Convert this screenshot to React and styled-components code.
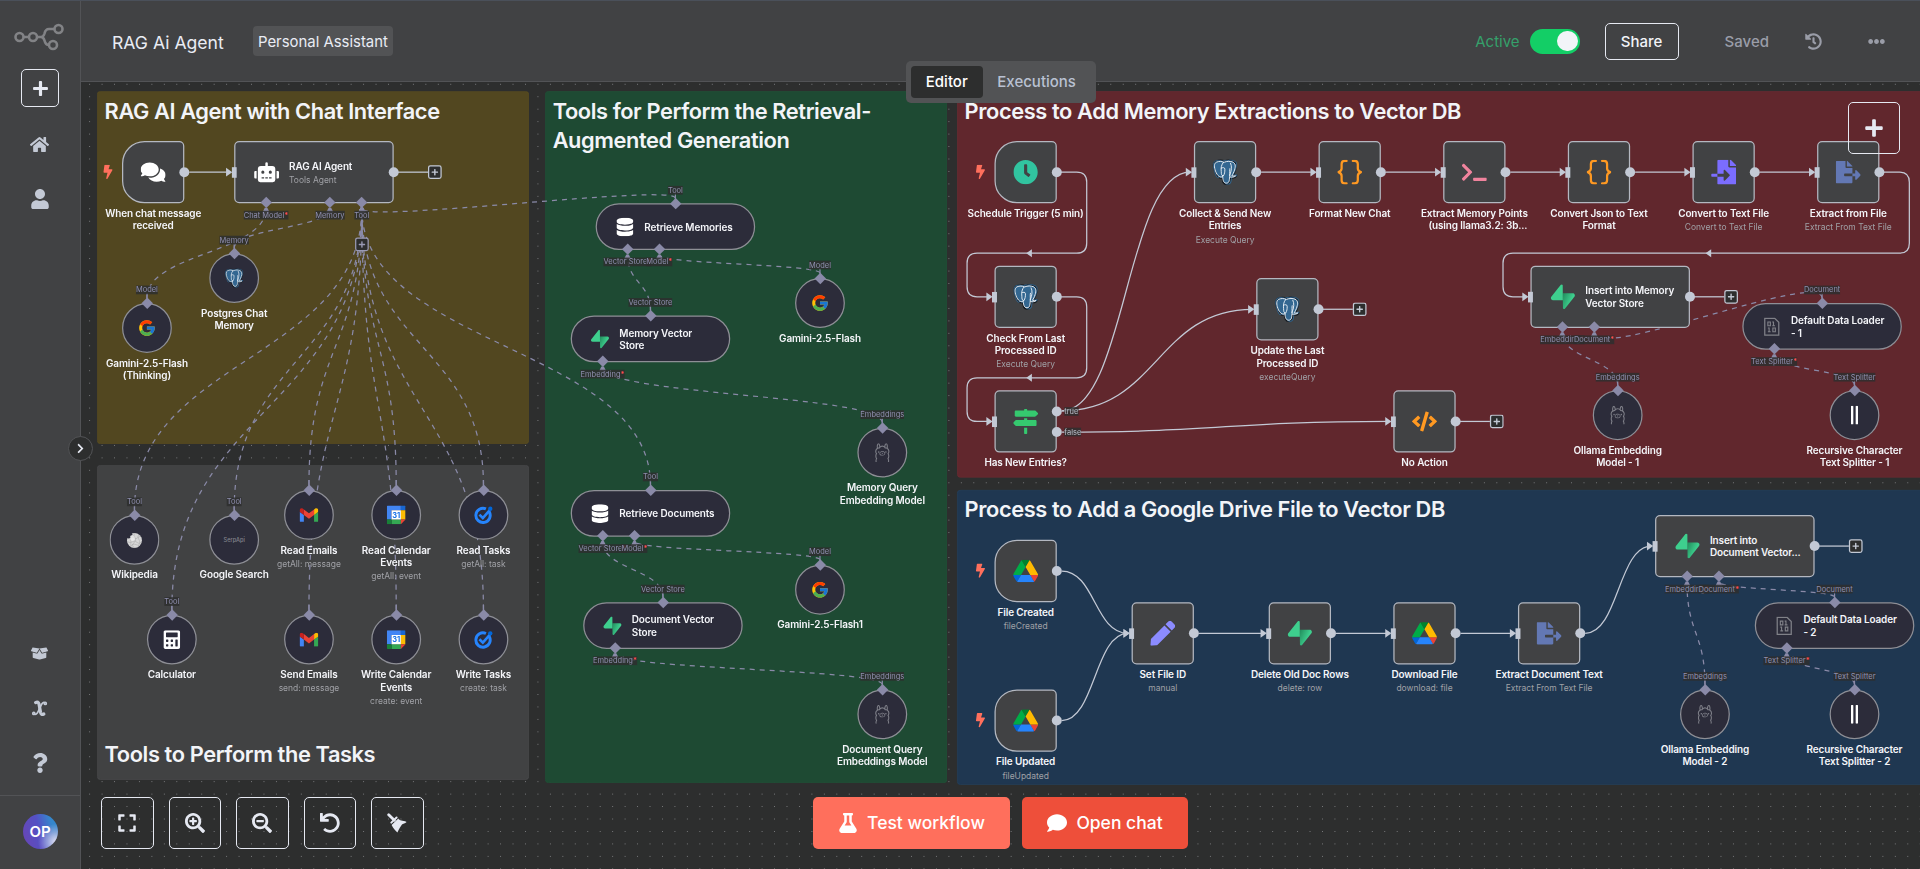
import React from 'react';
import styled, { createGlobalStyle, css } from 'styled-components';
import {
  FaBolt, FaBoxOpen, FaCalculator, FaChevronRight, FaClock, FaCode, FaComment, FaComments,
  FaDatabase, FaEllipsisH, FaExpand, FaFileExport, FaFileImport, FaFlask, FaGripLinesVertical,
  FaHistory, FaHome, FaMapSigns, FaPen, FaPlus, FaQuestion, FaRobot, FaSearchMinus, FaSearchPlus,
  FaTerminal, FaUndo, FaUser,
} from 'react-icons/fa';
import { FcGoogle } from 'react-icons/fc';
import { SiOllama, SiPostgresql } from 'react-icons/si';

const color = {
  panel: '#414244',
  canvas: '#2d2e2e',
  line: '#525356',
  raised: '#525355',
  light: '#e6e9f2',
  muted: '#c3c9d5',
  edge: '#c3c9d5',
  sub: '#8a8aa8',
};

const Global = createGlobalStyle`
  * { box-sizing: border-box; }
  body {
    margin: 0;
    background: ${color.canvas};
    font-family: Inter, "Liberation Sans", sans-serif;
    overflow: hidden;
  }
`;

/* ---------- shell ---------- */

const Shell = styled.div`
  display: flex;
  width: 100vw;
  height: 100vh;
  border-top: 1px solid #4a505a;
`;

const Sidebar = styled.nav`
  position: relative;
  z-index: 5;
  display: flex;
  flex-direction: column;
  align-items: center;
  width: 81px;
  flex: none;
  background: ${color.panel};
  border-right: 1px solid ${color.line};
`;

const Logo = styled.svg`
  width: 50px;
  height: 28px;
  margin: 22px 0 18px -2px;
`;

const SquareButton = styled.button`
  display: flex;
  align-items: center;
  justify-content: center;
  width: ${(p) => p.$size}px;
  height: ${(p) => p.$size}px;
  padding: 0;
  border: 1px solid ${color.light};
  border-radius: 5px;
  background: transparent;
  color: ${color.light};
  font-size: ${(p) => p.$icon}px;
`;

const NavItem = styled.div`
  display: flex;
  align-items: center;
  justify-content: center;
  height: 54.5px;
  padding-right: 1px;
  color: ${color.muted};
  font-size: ${(p) => p.$icon || 19}px;
`;

const NavTop = styled.div`
  display: flex;
  flex-direction: column;
  margin-top: 10px;
  flex: 1;
`;

const NavBottom = styled.div`
  display: flex;
  flex-direction: column;
  margin-bottom: 5px;
`;

const AvatarRow = styled.div`
  display: flex;
  align-items: center;
  justify-content: center;
  width: 100%;
  height: 74px;
  padding-bottom: 2px;
  border-top: 1px solid ${color.line};
`;

const Avatar = styled.div`
  display: flex;
  align-items: center;
  justify-content: center;
  width: 35px;
  height: 35px;
  border-radius: 50%;
  background:
    radial-gradient(circle at 95% 80%, #e4e0f4 0%, rgba(190, 190, 230, 0.6) 22%, transparent 42%),
    linear-gradient(75deg, #6a45b4 0%, #5450c4 48%, #3587cc 80%);
  color: #fff;
  font-size: 15px;
  font-weight: 600;
`;

const Expander = styled.div`
  position: absolute;
  right: -13px;
  top: 435px;
  display: flex;
  align-items: center;
  justify-content: center;
  width: 25px;
  height: 25px;
  border: 1px solid ${color.line};
  border-radius: 50%;
  background: ${color.canvas};
  color: ${color.light};
  font-size: 11px;
`;

const Main = styled.main`
  position: relative;
  display: flex;
  flex-direction: column;
  flex: 1;
  min-width: 0;
`;

const Header = styled.header`
  display: flex;
  align-items: center;
  height: 81px;
  flex: none;
  padding: 0 35.5px 0 31px;
  background: ${color.panel};
  border-bottom: 1px solid ${color.line};
`;

const Title = styled.div`
  width: 141px;
  color: #e9ecf4;
  font-size: 17.6px;
  white-space: nowrap;
  padding-top: 3px;
`;

const Tag = styled.div`
  height: 30px;
  padding: 0 5px;
  border-radius: 4px;
  background: ${color.raised};
  color: #e9ecf4;
  font-size: 14.9px;
  line-height: 32px;
`;

const HeaderEnd = styled.div`
  display: flex;
  align-items: center;
  margin-left: auto;
  color: #9a9da8;
  font-size: 15px;
  font-weight: 500;
`;

const ActiveText = styled.span`
  color: #35a06b;
  font-weight: 400;
  margin-right: 10px;
`;

const Toggle = styled.span`
  display: flex;
  justify-content: flex-end;
  width: 50px;
  height: 25px;
  padding: 2px;
  border-radius: 13px;
  background: #13ce66;
  margin-right: 25px;

  &::after {
    content: '';
    width: 20.5px;
    height: 20.5px;
    border-radius: 50%;
    background: #f2f4f8;
  }
`;

const Share = styled.button`
  width: 74px;
  height: 37px;
  padding: 0;
  border: 1px solid ${color.light};
  border-radius: 5px;
  background: transparent;
  color: #f2f4f8;
  font: 500 15px Inter, sans-serif;
  margin-right: 46px;
`;

const HeaderIcon = styled.span`
  display: flex;
  font-size: ${(p) => p.$size}px;
  margin-left: ${(p) => p.$gap}px;
`;

const Tabs = styled.div`
  position: absolute;
  z-index: 4;
  left: 825px;
  top: 60px;
  display: flex;
  height: 42px;
  padding: 5px;
  border-radius: 5px;
  background: ${color.raised};
`;

const Tab = styled.div`
  padding: 0 14.8px;
  border-radius: 4px;
  background: ${(p) => (p.$on ? color.canvas : 'transparent')};
  color: ${(p) => (p.$on ? '#fff' : '#b9c1d2')};
  font-size: 15px;
  font-weight: 500;
  line-height: 32px;
`;

/* ---------- canvas ---------- */

const Canvas = styled.section`
  position: relative;
  flex: 1;
  overflow: hidden;
  background-color: ${color.canvas};
  background-image: radial-gradient(circle, #7b7c7e 0.5px, transparent 0.95px);
  background-size: 12.46px 12.46px;
  background-position: 2.4px 8.5px;
`;

const World = styled.div`
  position: absolute;
  left: 41px;
  top: 59px;
  transform: scale(0.6232);
  transform-origin: 0 0;
`;

const Sticky = styled.div`
  position: absolute;
  left: ${(p) => p.$x}px;
  top: ${(p) => p.$y}px;
  width: ${(p) => p.$w}px;
  height: ${(p) => p.$h}px;
  padding: 6px 11px;
  border: 1.5px solid ${(p) => p.$line};
  border-radius: 5px;
  background: ${(p) => p.$bg};
`;

const StickyTitle = styled.h2`
  margin: 0;
  margin-top: ${(p) => p.$gap || 0}px;
  color: #f2f4f8;
  font-size: 35px;
  font-weight: 600;
  letter-spacing: -0.64px;
  line-height: 48px;
  white-space: pre;
`;

const EdgeLayer = styled.svg`
  position: absolute;
  left: 0;
  top: 0;
  width: 1px;
  height: 1px;
  overflow: visible;
`;

const shapes = {
  box: css`width: 100px; height: 100px; border-radius: 8px;`,
  trigger: css`width: 100px; height: 100px; border-radius: 36px 8px 8px 36px;`,
  wide: css`width: 256px; height: 100px; border-radius: 8px;`,
  pill: css`width: 256px; height: 75px; border-radius: 38px;`,
  circle: css`width: 80px; height: 80px; border-radius: 50%;`,
};

const NodeBody = styled.div`
  position: absolute;
  left: ${(p) => p.$x}px;
  top: ${(p) => p.$y}px;
  display: flex;
  align-items: center;
  justify-content: ${(p) => (p.$shape === 'wide' || p.$shape === 'pill' ? 'flex-start' : 'center')};
  gap: 16px;
  padding-left: ${(p) => (p.$shape === 'wide' || p.$shape === 'pill' ? 30 : 0)}px;
  border: 2px solid ${(p) => (p.$sub ? '#8e8f96' : '#b4b8c1')};
  background: ${(p) => (p.$sub ? '#2c2c3a' : color.panel)};
  ${(p) => shapes[p.$shape]}
`;

const IconSlot = styled.div`
  display: flex;
  align-items: center;
  justify-content: center;
  flex: none;
  width: ${(p) => p.$size}px;
  height: ${(p) => p.$size}px;
  font-size: ${(p) => p.$size}px;
  color: ${(p) => p.$color || '#fff'};
`;

const Caption = styled.div`
  position: absolute;
  left: 50%;
  top: calc(100% + 8px);
  transform: translateX(-50%);
  text-align: center;
  white-space: pre;
`;

const Name = styled.div`
  color: #f4f5f9;
  font-size: 16px;
  font-weight: 600;
  letter-spacing: -0.2px;
  line-height: 20px;
  white-space: pre;
`;

const SubTitle = styled.div`
  margin-top: 4px;
  color: #a0a1a6;
  font-size: 13.6px;
  line-height: 17px;
`;

const Dot = styled.i`
  position: absolute;
  right: -10px;
  top: ${(p) => p.$at}%;
  width: 16px;
  height: 16px;
  margin-top: -8px;
  border-radius: 50%;
  background: ${color.edge};
`;

const Inlet = styled.i`
  position: absolute;
  left: -6px;
  top: 50%;
  width: 8px;
  height: 17px;
  margin-top: -8.5px;
  background: ${color.edge};
`;

const Diamond = styled.i`
  position: absolute;
  left: ${(p) => p.$at}px;
  ${(p) => (p.$top ? 'top: -8px;' : 'bottom: -7px;')}
  width: 13px;
  height: 13px;
  margin-left: -8.5px;
  transform: rotate(45deg);
  background: ${color.sub};
`;

const PortLabel = styled.span`
  position: absolute;
  left: ${(p) => p.$at - 2}px;
  ${(p) => (p.$top ? 'top: -30.5px;' : 'bottom: -28px;')}
  transform: translateX(-50%);
  background: rgba(45, 46, 46, 0.86);
  color: #9090b0;
  font-size: 12px;
  line-height: 14px;
  white-space: nowrap;

  b { color: #ff4d4d; font-weight: 700; }
`;

const BranchLabel = styled.span`
  position: absolute;
  left: 110px;
  top: ${(p) => p.$at}%;
  transform: translateY(-50%);
  background: rgba(45, 46, 46, 0.82);
  color: #b9bdc8;
  font-size: 12px;
  line-height: 14px;
`;

const AddStub = styled.span`
  position: absolute;
  left: 100%;
  top: 50%;
  display: flex;
  align-items: center;
  height: 22px;
  margin-top: -11px;

  &::before {
    content: '';
    width: 57px;
    height: 2px;
    background: ${color.edge};
  }
`;

const AddBox = styled.span`
  display: flex;
  align-items: center;
  justify-content: center;
  width: 22px;
  height: 22px;
  border: 2px solid ${(p) => p.$tone};
  border-radius: 4px;
  background: ${color.canvas};
  color: ${(p) => p.$tone};
  font-size: 12px;
`;

const ToolStub = styled.span`
  position: absolute;
  left: ${(p) => p.$at - 13}px;
  top: 100%;
  display: flex;
  flex-direction: column;
  align-items: center;

  &::before {
    content: '';
    width: 2px;
    height: 57px;
    background: ${color.sub};
  }
`;

const Bolt = styled.span`
  position: absolute;
  left: -36px;
  top: 36px;
  display: flex;
  color: #ff6f5c;
  font-size: 23px;
`;

const SerpText = styled.span`
  color: #83848c;
  font-size: 9px;
  font-weight: 500;
`;

/* ---------- overlays ---------- */

const AddNode = styled.div`
  position: absolute;
  right: 20px;
  top: 20px;
`;

const Controls = styled.div`
  position: absolute;
  left: 20px;
  bottom: 20px;
  display: flex;
  gap: 15px;
`;

const Actions = styled.div`
  position: absolute;
  left: 732px;
  bottom: 20px;
  display: flex;
  gap: 12px;
`;

const Action = styled.button`
  display: flex;
  align-items: center;
  justify-content: center;
  gap: 9px;
  width: ${(p) => p.$w}px;
  height: 52px;
  padding: 0 0 1px;
  border: 0;
  border-radius: 5px;
  background: ${(p) => p.$bg};
  color: #fff;
  font: 500 17.5px Inter, sans-serif;

  svg { font-size: 20px; }
`;

/* ---------- drawings ---------- */

const Broom = () => (
  <svg viewBox="0 0 20 20" width="1em" height="1em" fill="currentColor">
    <path d="M1.700 1.700L7.300 7.300" stroke="currentColor" strokeWidth="2.800" strokeLinecap="round" />
    <path d="M4.300 9.600L9.600 4.500" stroke="currentColor" strokeWidth="2" strokeLinecap="round" />
    <path d="M4.600 12L11.300 5.600C12.500 8 15.500 7.300 19.600 9C18 10.600 16 10.400 15 11.600C13.800 13.200 12 16 10.400 19.500C8.500 17.500 6 15.500 4.600 12Z" />
  </svg>
);

const Drive = () => (
  <svg viewBox="0 0 87.3 78" width="1em" height="0.9em">
    <path fill="#0066da" d="m6.6 66.85 3.85 6.65c.8 1.4 1.95 2.5 3.3 3.3l13.75-23.8h-27.5c0 1.55.4 3.1 1.2 4.5z" />
    <path fill="#00ac47" d="m43.65 25-13.75-23.8c-1.35.8-2.5 1.9-3.3 3.3l-25.4 44a9.06 9.06 0 0 0 -1.2 4.5h27.5z" />
    <path fill="#ea4335" d="m73.55 76.8c1.35-.8 2.5-1.9 3.3-3.3l1.6-2.75 7.65-13.25c.8-1.4 1.2-2.95 1.2-4.5h-27.502l5.852 11.5z" />
    <path fill="#00832d" d="m43.65 25 13.75-23.8c-1.35-.8-2.9-1.2-4.5-1.2h-18.5c-1.6 0-3.15.45-4.5 1.2z" />
    <path fill="#2684fc" d="m59.8 53h-32.3l-13.75 23.8c1.35.8 2.9 1.2 4.5 1.2h50.8c1.6 0 3.15-.45 4.5-1.2z" />
    <path fill="#ffba00" d="m73.4 26.5-12.7-22c-.8-1.4-1.95-2.5-3.3-3.3l-13.75 23.8 16.15 28h27.45c0-1.55-.4-3.1-1.2-4.5z" />
  </svg>
);

const Gmail = () => (
  <svg viewBox="52 42 88 66" width="1em" height="0.76em">
    <path fill="#4285f4" d="M58 108h14V74L52 59v43c0 3.32 2.69 6 6 6" />
    <path fill="#34a853" d="M120 108h14c3.32 0 6-2.69 6-6V59l-20 15" />
    <path fill="#fbbc04" d="M120 48v26l20-15v-8c0-7.42-8.47-11.65-14.4-7.2" />
    <path fill="#ea4335" d="M72 74V48l24 18 24-18v26L96 92" />
    <path fill="#c5221f" d="M52 51v8l20 15V48l-5.6-4.2c-5.94-4.45-14.4-.22-14.4 7.2" />
  </svg>
);

const CalendarDay = styled.text`
  font: 700 24px Inter, sans-serif;
  fill: #1a73e8;
`;

const Calendar = () => (
  <svg viewBox="0 0 60 60" width="1em" height="1em">
    <path fill="#4285f4" d="M2 0h43v15H15v30H0V2z" />
    <path fill="#1967d2" d="M45 0h13l2 2v13H45z" />
    <path fill="#fbbc04" d="M45 15h15v30H45z" />
    <path fill="#34a853" d="M15 45h30v15H15z" />
    <path fill="#188038" d="M0 45h15v15H2l-2-2z" />
    <path fill="#ea4335" d="M45 45h15L45 60z" />
    <path fill="#fff" d="M15 15h30v30H15z" />
    <CalendarDay x="30" y="38.5" textAnchor="middle">31</CalendarDay>
  </svg>
);

const Tasks = () => (
  <svg viewBox="0 0 60 60" width="1em" height="1em">
    <path d="M48.5 20A23 23 0 1 1 38 10.5" fill="none" stroke="#2684fc" strokeWidth="9.5" />
    <path d="M17 29l11 11L51 14" fill="none" stroke="#2684fc" strokeWidth="8.5" />
    <circle cx="52" cy="10" r="7" fill="#0066da" />
  </svg>
);

const Supabase = () => (
  <svg viewBox="0 0 109 113" width="1em" height="1em">
    <defs>
      <linearGradient id="bolt" x1="54" y1="54" x2="94" y2="71" gradientUnits="userSpaceOnUse">
        <stop stopColor="#249361" />
        <stop offset="1" stopColor="#3ecf8e" />
      </linearGradient>
    </defs>
    <path fill="url(#bolt)" d="M63.7076 110.284C60.8481 113.885 55.0502 111.912 54.9813 107.314L53.9738 40.0627L99.1935 40.0627C107.384 40.0627 111.952 49.5228 106.859 55.9374L63.7076 110.284Z" />
    <path fill="#3ecf8e" d="M45.317 2.07103C48.1765 -1.53037 53.9745 0.442937 54.0434 5.041L54.4849 72.2922H9.83113C1.64038 72.2922 -2.92775 62.8321 2.1655 56.4175L45.317 2.07103Z" />
  </svg>
);

const Braces = () => (
  <svg viewBox="0 0 40 40" width="1em" height="1em" fill="none" stroke="currentColor" strokeWidth="3.6" strokeLinecap="round" strokeLinejoin="round">
    <path d="M15 2h-3q-5 0-5 5v7q0 4-5 6q5 2 5 6v7q0 5 5 5h3" />
    <path d="M25 2h3q5 0 5 5v7q0 4 5 6q-5 2-5 6v7q0 5-5 5h-3" />
  </svg>
);

const PostgresStack = styled.span`
  display: grid;
  > svg { grid-area: 1 / 1; overflow: visible; }
  > svg:last-child { transform: scale(0.96); }
`;

const Postgres = () => (
  <PostgresStack>
    <svg viewBox="0 0 24 24" width="1em" height="1em">
      <path
        d="M3 1.500C6 .2 9 .4 11.500 1.200C14 .2 17.500 .2 20 1.300C23 2.800 23.500 6 22 10C21 13 20.200 14.500 19.600 15.500L23 15.300C22.500 17 20 17.800 17 17.500C17 20 17.200 23.500 13.500 23.700C10 23.800 9.500 21 9.400 17.300C7 18.500 4 16.500 2 11C.6 7 .2 3 3 1.500Z"
        fill="#336791" stroke="#15181c" strokeWidth="1.300"
      />
    </svg>
    <SiPostgresql color="#336791" stroke="#336791" strokeWidth="0.1" />
    <svg viewBox="0 0 24 24" width="1em" height="1em" fill="none" stroke="#e9eff5" strokeWidth="0.95" strokeLinecap="round" strokeLinejoin="round">
      <path d="M9.400 16.500C7 17.800 4.300 16 2.400 11C1 7 .7 3.300 3.300 2C6 .9 8.500 1 10.500 2" />
      <path d="M11.500 1.900C14 .9 17.300 .9 19.700 1.900C22.500 3.200 22.800 6 21.500 9.800C20.700 12.300 19.800 14 18.800 15.500C20 16 21.500 15.900 22.500 15.700C21.500 16.900 19.200 17.200 17 16.900" />
      <path d="M10.500 2C8 4.500 7.800 8 8.200 11.500C8.400 14 8 15 9.600 15.600M9.600 15.600C9.800 19 9.900 23 13.400 23C16.600 22.900 16.300 19.500 16.700 15" />
      <path d="M17.500 3C19 6 18.700 10.500 16.700 15M8.200 8C9.600 7 11.800 7.200 11.800 9C11.800 12 11.600 13.500 10.400 15.600M16.800 8.500C16.400 10 16.800 12 16.700 15" />
    </svg>
  </PostgresStack>
);

const Wikipedia = () => (
  <svg viewBox="0 0 30 30" width="1em" height="1em">
    <circle cx="15" cy="16" r="12" fill="#d6d6d6" />
    <path d="M3 12C3 7 6 4 10 3L12 7L8 9L9 12L5 13Z" fill="#2c2c3a" />
    <path d="M9 12q4-3 6 0t6-1t6 1M4 18q4 3 8 0t7 1t8-1M9 26q2-5 6-4t7 2M15 4q-2 5 1 8t-2 8t2 8M22 6q-3 4 0 8t-1 12M8 12q2 6 1 13" fill="none" stroke="#a0a0a0" strokeWidth="0.7" />
    <circle cx="12" cy="13" r="4" fill="#f4f4f4" opacity="0.6" />
  </svg>
);

const BinaryFile = () => (
  <svg viewBox="0 0 30 30" width="1em" height="1em" fill="none" stroke="#808188" strokeWidth="2">
    <path d="M4 1.500h16l6.500 6.500v20.500h-22.500z" />
    <path d="M9 7.500h4v6h-4zM18 13.500v-6h-2M16 13.500h4.500M11 23v-6h-2M9 23h4.500M17 17h4v6h-4z" strokeWidth="1.800" />
  </svg>
);

const Variable = () => (
  <svg viewBox="0 0 20 20" width="1em" height="1em" fill="none" stroke="currentColor" strokeLinecap="round">
    <path d="M5.500 3Q8.500 1.300 9.500 5L11.200 14.500Q12 18 15 16.500" strokeWidth="3.800" />
    <path d="M16.500 3.500Q14 1.500 12 6L8.500 13.500Q6.500 18 3.500 16.500" strokeWidth="2" />
    <circle cx="16.800" cy="4" r="1.300" strokeWidth="1.800" />
    <circle cx="3.300" cy="15.800" r="1.300" strokeWidth="1.800" />
  </svg>
);

const LogoMark = () => (
  <Logo viewBox="0 0 50 28" fill="none" stroke="#828386" strokeWidth="2.600">
    <circle cx="5.500" cy="14" r="4" />
    <circle cx="19" cy="14" r="4" />
    <circle cx="44.500" cy="6" r="4" />
    <circle cx="39" cy="22" r="4" />
    <path d="M9.500 14h5.500M23 14h4Q29.500 14 30.500 10.500Q31.500 6 35 6H40.500M27 14Q29.500 14 30.500 17.500Q31.500 22 35 22" />
  </Logo>
);

/* ---------- workflow data ---------- */

const icons = {
  chat: [<FaComments />], robot: [<FaRobot />], db: [<FaDatabase />], calc: [<FaCalculator />],
  google: [<FcGoogle />], pg: [<Postgres />], wiki: [<Wikipedia />], serp: [<SerpText>SerpApi</SerpText>],
  gmail: [<Gmail />], cal: [<Calendar />], tasks: [<Tasks />], supa: [<Supabase />],
  ollama: [<SiOllama />, '#7d7e87'], bin: [<BinaryFile />], split: [<FaGripLinesVertical />],
  clock: [<FaClock />, '#31c4a0'], braces: [<Braces />, '#ff9922'], term: [<FaTerminal />, '#f0839d'],
  imp: [<FaFileImport />, '#7b6dff'], exp: [<FaFileExport />, '#6378b4'], signs: [<FaMapSigns />, '#35c96f'],
  code: [<FaCode />, '#ff9922'], pen: [<FaPen />, '#8b8bff'], drive: [<Drive />],
};

const subTop = (shape, label) => [{ at: shape === 'pill' ? 128 : 40, label }];

const nodes = [
  { x: 0, y: 0, shape: 'trigger', icon: 'chat', name: 'When chat message\nreceived' },
  { x: 180, y: 0, shape: 'wide', icon: 'robot', name: 'RAG AI Agent', sub: 'Tools Agent', add: true, tool: 204.8,
    ports: [{ at: 51.2, label: 'Chat Model', req: true }, { at: 153.6, label: 'Memory' }, { at: 204.8, label: 'Tool' }] },
  { x: 140, y: 180, shape: 'circle', icon: 'pg', name: 'Postgres Chat\nMemory', top: 'Memory' },
  { x: 0, y: 260, shape: 'circle', icon: 'google', name: 'Gamini-2.5-Flash\n(Thinking)', top: 'Model' },

  { x: -20, y: 600, shape: 'circle', icon: 'wiki', name: 'Wikipedia', top: 'Tool' },
  { x: 140, y: 600, shape: 'circle', icon: 'serp', name: 'Google Search', top: 'Tool' },
  { x: 260, y: 560, shape: 'circle', icon: 'gmail', name: 'Read Emails', sub: 'getAll: message', top: '' },
  { x: 400, y: 560, shape: 'circle', icon: 'cal', name: 'Read Calendar\nEvents', sub: 'getAll: event', top: '' },
  { x: 540, y: 560, shape: 'circle', icon: 'tasks', name: 'Read Tasks', sub: 'getAll: task', top: '' },
  { x: 40, y: 760, shape: 'circle', icon: 'calc', name: 'Calculator', top: 'Tool' },
  { x: 260, y: 760, shape: 'circle', icon: 'gmail', name: 'Send Emails', sub: 'send: message', top: '' },
  { x: 400, y: 760, shape: 'circle', icon: 'cal', name: 'Write Calendar\nEvents', sub: 'create: event', top: '' },
  { x: 540, y: 760, shape: 'circle', icon: 'tasks', name: 'Write Tasks', sub: 'create: task', top: '' },

  { x: 760, y: 100, shape: 'pill', icon: 'db', name: 'Retrieve Memories', top: 'Tool',
    ports: [{ at: 51.2, label: 'Vector Store', req: true }, { at: 102.4, label: 'Model', req: true }] },
  { x: 720, y: 280, shape: 'pill', icon: 'supa', name: 'Memory Vector\nStore', top: 'Vector Store',
    ports: [{ at: 51.2, label: 'Embedding', req: true }] },
  { x: 720, y: 560, shape: 'pill', icon: 'db', name: 'Retrieve Documents', top: 'Tool',
    ports: [{ at: 51.2, label: 'Vector Store', req: true }, { at: 102.4, label: 'Model', req: true }] },
  { x: 740, y: 740, shape: 'pill', icon: 'supa', name: 'Document Vector\nStore', top: 'Vector Store',
    ports: [{ at: 51.2, label: 'Embedding', req: true }] },
  { x: 1080, y: 220, shape: 'circle', icon: 'google', name: 'Gamini-2.5-Flash', top: 'Model' },
  { x: 1080, y: 680, shape: 'circle', icon: 'google', name: 'Gamini-2.5-Flash1', top: 'Model' },
  { x: 1180, y: 460, shape: 'circle', icon: 'ollama', name: 'Memory Query\nEmbedding Model', top: 'Embeddings' },
  { x: 1180, y: 880, shape: 'circle', icon: 'ollama', name: 'Document Query\nEmbeddings Model', top: 'Embeddings' },

  { x: 1400, y: 0, shape: 'trigger', icon: 'clock', name: 'Schedule Trigger (5 min)' },
  { x: 1400, y: 200, shape: 'box', icon: 'pg', name: 'Check From Last\nProcessed ID', sub: 'Execute Query' },
  { x: 1400, y: 400, shape: 'box', icon: 'signs', name: 'Has New Entries?', branches: true },
  { x: 1720, y: 0, shape: 'box', icon: 'pg', name: 'Collect & Send New\nEntries', sub: 'Execute Query' },
  { x: 1820, y: 220, shape: 'box', icon: 'pg', name: 'Update the Last\nProcessed ID', sub: 'executeQuery', add: true },
  { x: 1920, y: 0, shape: 'box', icon: 'braces', name: 'Format New Chat' },
  { x: 2120, y: 0, shape: 'box', icon: 'term', name: 'Extract Memory Points\n\u00a0\u00a0\u00a0(using llama3.2: 3b...' },
  { x: 2320, y: 0, shape: 'box', icon: 'braces', name: 'Convert Json to Text\nFormat' },
  { x: 2520, y: 0, shape: 'box', icon: 'imp', name: 'Convert to Text File', sub: 'Convert to Text File' },
  { x: 2720, y: 0, shape: 'box', icon: 'exp', name: 'Extract from File', sub: 'Extract From Text File' },
  { x: 2040, y: 400, shape: 'box', icon: 'code', name: 'No Action', add: true },
  { x: 2260, y: 200, shape: 'wide', icon: 'supa', name: 'Insert into Memory\nVector Store', add: true,
    ports: [{ at: 51.2, label: 'Embedding', req: true }, { at: 102.4, label: 'Document', req: true }] },
  { x: 2600, y: 260, shape: 'pill', icon: 'bin', name: 'Default Data Loader\n- 1', top: 'Document',
    ports: [{ at: 51.2, label: 'Text Splitter', req: true }] },
  { x: 2360, y: 400, shape: 'circle', icon: 'ollama', name: 'Ollama Embedding\nModel - 1', top: 'Embeddings' },
  { x: 2740, y: 400, shape: 'circle', icon: 'split', name: 'Recursive Character\nText Splitter - 1', top: 'Text Splitter' },

  { x: 1400, y: 640, shape: 'trigger', icon: 'drive', name: 'File Created', sub: 'fileCreated' },
  { x: 1400, y: 880, shape: 'trigger', icon: 'drive', name: 'File Updated', sub: 'fileUpdated' },
  { x: 1620, y: 740, shape: 'box', icon: 'pen', name: 'Set File ID', sub: 'manual' },
  { x: 1840, y: 740, shape: 'box', icon: 'supa', name: 'Delete Old Doc Rows', sub: 'delete: row' },
  { x: 2040, y: 740, shape: 'box', icon: 'drive', name: 'Download File', sub: 'download: file' },
  { x: 2240, y: 740, shape: 'box', icon: 'exp', name: 'Extract Document Text', sub: 'Extract From Text File' },
  { x: 2460, y: 600, shape: 'wide', icon: 'supa', name: 'Insert into\nDocument Vector...', add: true,
    ports: [{ at: 51.2, label: 'Embedding', req: true }, { at: 102.4, label: 'Document', req: true }] },
  { x: 2620, y: 740, shape: 'pill', icon: 'bin', name: 'Default Data Loader\n- 2', top: 'Document',
    ports: [{ at: 51.2, label: 'Text Splitter', req: true }] },
  { x: 2500, y: 880, shape: 'circle', icon: 'ollama', name: 'Ollama Embedding\nModel - 2', top: 'Embeddings' },
  { x: 2740, y: 880, shape: 'circle', icon: 'split', name: 'Recursive Character\nText Splitter - 2', top: 'Text Splitter' },
];

/* [right edge x, y, left edge x, y] of the joined nodes */
const mainEdges = [
  [100, 50, 180, 50], [1820, 50, 1920, 50], [2020, 50, 2120, 50], [2220, 50, 2320, 50],
  [2420, 50, 2520, 50], [2620, 50, 2720, 50], [1500, 433, 1720, 50], [1500, 433, 1820, 270],
  [1500, 467, 2040, 450], [1500, 690, 1620, 790], [1500, 930, 1620, 790], [1720, 790, 1840, 790],
  [1940, 790, 2040, 790], [2140, 790, 2240, 790], [2340, 790, 2460, 650],
];

/* edges that loop back to a node further left */
const loopEdges = [
  [1500, 50, 1400, 250, 180], [1500, 250, 1400, 450, 380], [2820, 50, 2260, 250, 180],
];

/* [sub-node top x, y, parent port x, y] */
const subEdges = [
  [40, 260, 231.2, 100], [180, 180, 333.6, 100],
  [20, 600, 384.8, 100], [180, 600, 384.8, 100], [80, 760, 384.8, 100],
  [300, 560, 384.8, 100], [300, 760, 384.8, 100], [440, 560, 384.8, 100], [440, 760, 384.8, 100],
  [580, 560, 384.8, 100], [580, 760, 384.8, 100], [888, 100, 384.8, 100], [848, 560, 384.8, 100],
  [848, 280, 811.2, 175], [1120, 220, 862.4, 175], [1220, 460, 771.2, 355],
  [868, 740, 771.2, 635], [1120, 680, 822.4, 635], [1220, 880, 791.2, 815],
  [2400, 400, 2311.2, 300], [2728, 260, 2362.4, 300], [2780, 400, 2651.2, 335],
  [2540, 880, 2511.2, 700], [2748, 740, 2562.4, 700], [2780, 880, 2671.2, 815],
];

function mainPath([x1, y1, x2, y2]) {
  const a = x1 + 8;
  const b = x2 - 6;
  const m = (a + b) / 2;
  return `M${a} ${y1}C${m} ${y1} ${m} ${y2} ${b} ${y2}`;
}

function loopPath([x1, y1, x2, y2, mid]) {
  const r = x1 + 48;
  const l = x2 - 44;
  const c = 16;
  return `M${x1} ${y1}H${r - c}Q${r} ${y1} ${r} ${y1 + c}V${mid - c}Q${r} ${mid} ${r - c} ${mid}`
    + `H${l + c}Q${l} ${mid} ${l} ${mid + c}V${y2 - c}Q${l} ${y2} ${l + c} ${y2}H${x2 - 6}`;
}

function subPath([x1, y1, x2, y2]) {
  const a = y1 - 8;
  const b = y2 + 8;
  const d = a - b;
  const off = d >= 0 ? d / 2 : 6.25 * Math.sqrt(-d);
  return `M${x1} ${a}C${x1} ${a - off} ${x2} ${b + off} ${x2} ${b}`;
}

function Edges() {
  return (
    <EdgeLayer>
      <g fill="none" stroke={color.sub} strokeWidth="2">
        {subEdges.map((e, i) => <path key={i} d={subPath(e)} strokeDasharray="8 8" />)}
        {subEdges.map(([x, y], i) => <path key={i} d={`M${x} ${y}v-16`} />)}
      </g>
      <g fill={color.sub}>
        {subEdges.map(([, , x, y], i) => <path key={i} d={`M${x - 6} ${y + 15}h12l-4 -8h-4z`} />)}
      </g>
      <g fill="none" stroke={color.edge} strokeWidth="2">
        {mainEdges.map((e, i) => <path key={i} d={mainPath(e)} />)}
        {loopEdges.map((e, i) => <path key={i} d={loopPath(e)} />)}
      </g>
      <g fill={color.edge}>
        {[...mainEdges, ...loopEdges].map(([, , x, y], i) => (
          <path key={i} d={`M${x - 3} ${y}l-10 7v-14z`} />
        ))}
        {loopEdges.map(([x1, , x2, , mid], i) => (
          <path key={i} d={`M${(x1 + x2) / 2 + 1} ${mid}l9 6.500v-13z`} />
        ))}
      </g>
    </EdgeLayer>
  );
}

function WorkflowNode({ node }) {
  const { x, y, shape, icon, name, sub, ports = [], top } = node;
  const isSub = shape === 'pill' || shape === 'circle';
  const inside = shape === 'wide' || shape === 'pill';
  const [glyph, tint] = icons[icon];
  const text = (
    <>
      <Name>{name}</Name>
      {sub && <SubTitle>{sub}</SubTitle>}
    </>
  );
  return (
    <NodeBody $x={x} $y={y} $shape={shape} $sub={isSub}>
      {shape === 'trigger' && <Bolt><FaBolt /></Bolt>}
      <IconSlot $size={isSub ? 30 : 40} $color={tint}>{glyph}</IconSlot>
      {inside ? <div>{text}</div> : <Caption>{text}</Caption>}
      {!isSub && shape !== 'trigger' && <Inlet />}
      {node.add && <AddStub><AddBox $tone={color.edge}><FaPlus /></AddBox></AddStub>}
      {node.tool && <ToolStub $at={node.tool}><AddBox $tone="#9a9ab4"><FaPlus /></AddBox></ToolStub>}
      {!isSub && !node.branches && <Dot $at={50} />}
      {node.branches && (
        <>
          <Dot $at={33} /><Dot $at={67.5} />
          <BranchLabel $at={33}>true</BranchLabel>
          <BranchLabel $at={67.5}>false</BranchLabel>
        </>
      )}
      {top !== undefined && subTop(shape, top).map((p) => (
        <React.Fragment key={p.label}>
          <Diamond $top $at={p.at} />
          {p.label && <PortLabel $top $at={p.at}>{p.label}</PortLabel>}
        </React.Fragment>
      ))}
      {ports.map((p) => (
        <React.Fragment key={p.label}>
          <Diamond $at={p.at} />
          <PortLabel $at={p.at}>{p.label}{p.req && <b>*</b>}</PortLabel>
        </React.Fragment>
      ))}
    </NodeBody>
  );
}

export default function App() {
  return (
    <>
      <Global />
      <Shell>
        <Sidebar>
          <LogoMark />
          <SquareButton $size={38} $icon={17}><FaPlus /></SquareButton>
          <NavTop>
            <NavItem><FaHome /></NavItem>
            <NavItem $icon={20}><FaUser /></NavItem>
          </NavTop>
          <NavBottom>
            <NavItem $icon={17}><FaBoxOpen /></NavItem>
            <NavItem $icon={17}><Variable /></NavItem>
            <NavItem $icon={20}><FaQuestion /></NavItem>
          </NavBottom>
          <AvatarRow><Avatar>OP</Avatar></AvatarRow>
          <Expander><FaChevronRight /></Expander>
        </Sidebar>
        <Main>
          <Header>
            <Title>RAG Ai Agent</Title>
            <Tag>Personal Assistant</Tag>
            <HeaderEnd>
              <ActiveText>Active</ActiveText>
              <Toggle />
              <Share>Share</Share>
              <span>Saved</span>
              <HeaderIcon $size={17} $gap={36}><FaHistory /></HeaderIcon>
              <HeaderIcon $size={17} $gap={45.5}><FaEllipsisH /></HeaderIcon>
            </HeaderEnd>
          </Header>
          <Tabs>
            <Tab $on>Editor</Tab>
            <Tab>Executions</Tab>
          </Tabs>
          <Canvas>
            <World>
              <Sticky $x={-40} $y={-80} $w={693} $h={566} $bg="#524720" $line="#61531f">
                <StickyTitle>RAG AI Agent with Chat Interface</StickyTitle>
              </Sticky>
              <Sticky $x={-40} $y={520} $w={693} $h={505} $bg="#414243" $line="#4d4e50">
                <StickyTitle $gap={432}>Tools to Perform the Tasks</StickyTitle>
              </Sticky>
              <Sticky $x={679} $y={-80} $w={645} $h={1110} $bg="#1e4a33" $line="#1f5538">
                <StickyTitle>{'Tools for Perform the Retrieval-\nAugmented Generation'}</StickyTitle>
              </Sticky>
              <Sticky $x={1340} $y={-80} $w={1600} $h={620} $bg="#61272d" $line="#712b33">
                <StickyTitle>Process to Add Memory Extractions to Vector DB</StickyTitle>
              </Sticky>
              <Sticky $x={1340} $y={560} $w={1600} $h={473} $bg="#1f3751" $line="#24425f">
                <StickyTitle>Process to Add a Google Drive File to Vector DB</StickyTitle>
              </Sticky>
              <Edges />
              {nodes.map((n) => <WorkflowNode key={`${n.x}:${n.y}`} node={n} />)}
            </World>
            <AddNode><SquareButton $size={52} $icon={20}><FaPlus /></SquareButton></AddNode>
            <Controls>
              <SquareButton $size={52.5} $icon={20}><FaExpand /></SquareButton>
              <SquareButton $size={52.5} $icon={20}><FaSearchPlus /></SquareButton>
              <SquareButton $size={52.5} $icon={20}><FaSearchMinus /></SquareButton>
              <SquareButton $size={52.5} $icon={20}><FaUndo /></SquareButton>
              <SquareButton $size={52.5} $icon={20}><Broom /></SquareButton>
            </Controls>
            <Actions>
              <Action $w={197} $bg="#ff6f5c"><FaFlask />Test workflow</Action>
              <Action $w={166} $bg="#ee4f3a"><FaComment />Open chat</Action>
            </Actions>
          </Canvas>
        </Main>
      </Shell>
    </>
  );
}
